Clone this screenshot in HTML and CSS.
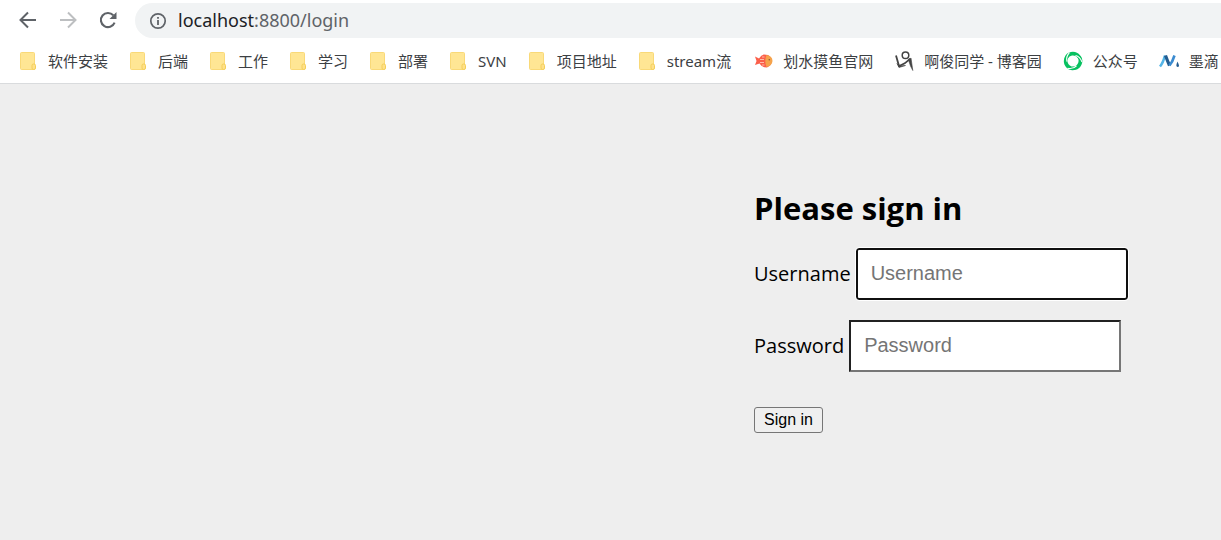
FILE: index.html
```
<!DOCTYPE html>
<html lang="zh">
<head>
    <meta charset="UTF-8">
    <meta name="viewport" content="width=device-width, initial-scale=1.0">
    <title>Please sign in</title>
    <link rel="stylesheet" href="styles.css">
</head>
<body>

<!-- folder icon shared by the bookmarks -->
<svg class="defs" width="0" height="0" aria-hidden="true">
    <symbol id="folder" viewBox="0 0 16 18">
        <rect x="0.5" y="0.5" width="14" height="17" rx="1" fill="#ffe694" stroke="#f9d978"/>
        <rect x="12" y="12" width="3.500" height="5.500" rx="1.500" fill="#ffe08a" stroke="#f3cf58"/>
    </symbol>
</svg>

<header class="browser">
    <div class="toolbar">
        <button class="nav-btn" type="button" aria-label="Back">
            <svg width="20" height="20" viewBox="0 0 20 20"><path d="M18 10H3M10 2.5L2.5 10L10 17.5" fill="none" stroke="#5f6368" stroke-width="2"/></svg>
        </button>
        <button class="nav-btn" type="button" aria-label="Forward">
            <svg width="20" height="20" viewBox="0 0 20 20"><path d="M2 10H17M10 2.5L17.5 10L10 17.5" fill="none" stroke="#bdbfc1" stroke-width="2"/></svg>
        </button>
        <button class="nav-btn" type="button" aria-label="Reload">
            <svg width="20" height="20" viewBox="0 0 20 20"><path d="M16.6 12.7A7.1 7.1 0 1 1 15.3 5.3" fill="none" stroke="#5f6368" stroke-width="2.1"/><path d="M18.5 2V9H11.5Z" fill="#5f6368"/></svg>
        </button>
        <div class="address" role="textbox" aria-label="Address">
            <svg width="18" height="18" viewBox="0 0 18 18"><circle cx="9" cy="9" r="7.2" fill="none" stroke="#5f6368" stroke-width="1.7"/><path d="M8.1 8H9.9V13H8.1ZM8.1 5H9.9V6.8H8.1Z" fill="#5f6368"/></svg>
            <span class="url"><span class="host">localhost</span>:8800/login</span>
        </div>
    </div>
    <nav class="bookmarks">
        <a href="#"><svg width="16" height="18"><use href="#folder"/></svg>软件安装</a>
        <a href="#"><svg width="16" height="18"><use href="#folder"/></svg>后端</a>
        <a href="#"><svg width="16" height="18"><use href="#folder"/></svg>工作</a>
        <a href="#"><svg width="16" height="18"><use href="#folder"/></svg>学习</a>
        <a href="#"><svg width="16" height="18"><use href="#folder"/></svg>部署</a>
        <a href="#"><svg width="16" height="18"><use href="#folder"/></svg>SVN</a>
        <a href="#"><svg width="16" height="18"><use href="#folder"/></svg>项目地址</a>
        <a href="#"><svg width="16" height="18"><use href="#folder"/></svg>stream流</a>
        <a href="#" class="site">
            <svg width="20" height="20" viewBox="0 0 20 20">
                <path d="M2 5.500L6 7.500Q8 4 11 3.500L15 4Q19 6.500 19 10Q18.500 14.500 14 16.500Q9 16.500 6.500 12.500L2 14L3.500 10Z" fill="#fb5f4a"/>
                <path d="M13.500 4Q19.500 5 19.500 10Q19 15 13.500 16Q11 10 13.500 4Z" fill="#f5a34b"/>
                <path d="M7 8.500H11M7 11.500H11M9 6H11.500M9 14H11.500" fill="none" stroke="#ffc4b4" stroke-width="0.900"/>
                <circle cx="16.300" cy="8.800" r="0.800" fill="#8d5a32"/>
            </svg>划水摸鱼官网</a>
        <a href="#" class="site">
            <svg width="20" height="20" viewBox="0 0 20 20">
                <circle cx="11.500" cy="4.200" r="3.300" fill="none" stroke="#444" stroke-width="1.500"/>
                <path d="M2 4.500L5 15Q12 12.500 16 7.500" fill="none" stroke="#444" stroke-width="1.800"/>
                <path d="M3 12.500L5 15L11.500 14.500L5 16.500ZM14.500 9L17 7L18.800 19.500L16.500 15Z" fill="#444" stroke="#444" stroke-width="0.600"/>
            </svg>啊俊同学 - 博客园</a>
        <a href="#" class="site">
            <svg width="20" height="20" viewBox="0 0 20 20">
                <!-- one blade, turned three times -->
                <defs>
                    <g id="blade">
                        <path d="M2.500 4.500C6 -0.500 14 -0.500 17 4.500L19.500 10.500L15.500 8C13 4 9 3.500 6 6C4 7.800 3.300 9.500 3.600 12C1 10 0.800 7 2.500 4.500Z" fill="#07c160"/>
                    </g>
                    <path id="slit" d="M12.500 4.500Q17 5.500 19 11" fill="none" stroke="#fff" stroke-width="1.100"/>
                </defs>
                <use href="#blade"/>
                <use href="#blade" transform="rotate(120 10 10)"/>
                <use href="#blade" transform="rotate(240 10 10)"/>
                <use href="#slit"/>
                <use href="#slit" transform="rotate(120 10 10)"/>
                <use href="#slit" transform="rotate(240 10 10)"/>
            </svg>公众号</a>
        <a href="#" class="site">
            <svg width="20" height="20" viewBox="0 0 20 20">
                <path d="M1 15.500Q4 12 6 4.500" fill="none" stroke="#54b5e8" stroke-width="2.600"/>
                <path d="M6.500 4.500Q8.500 10 10.500 14.500" fill="none" stroke="#245d91" stroke-width="3.200"/>
                <path d="M10.500 14.500Q13.500 11 15.500 4.500" fill="none" stroke="#3b8bd0" stroke-width="2.600"/>
                <path d="M18.500 10.500Q20.500 14.500 19.800 15.500Q18.500 16.500 17.500 15.300Q17 14 18.500 10.500Z" fill="#245d91"/>
            </svg>墨滴</a>
    </nav>
</header>

<main>
    <form class="form-signin" onsubmit="return false">
        <h2>Please sign in</h2>
        <p>
            <label for="username">Username</label>
            <input type="text" id="username" class="active" name="username" placeholder="Username" required>
        </p>
        <p>
            <label for="password">Password</label>
            <input type="password" id="password" name="password" placeholder="Password" required>
        </p>
        <button class="submit" type="submit">Sign in</button>
    </form>
</main>

</body>
</html>
```
FILE: styles.css
```
* {
    box-sizing: border-box;
}
body {
    margin: 0;
    background-color: #eeeeee;
    color: #000;
    font-family: "Noto Sans", "Noto Sans CJK SC", sans-serif;
    overflow-x: hidden;
}
.defs {
    position: absolute;
}
.browser {
    background: #fff;
    border-bottom: 1px solid #d9dbdd;
    overflow: hidden;
}
.toolbar {
    display: flex;
    align-items: center;
    gap: 20px;
    padding: 3px 0 0 18px;
}
.nav-btn {
    display: flex;
    padding: 0 0 2px;
    border: 0;
    background: none;
}
.address {
    display: flex;
    flex: 1;
    align-items: center;
    gap: 11px;
    height: 35px;
    margin-left: -3px;
    padding-left: 14px;
    border-radius: 18px 0 0 18px;
    background: #f1f3f4;
}
.url {
    padding-bottom: 2px;
    color: #5f6368;
    font-size: 18px;
    line-height: 24px;
}
.host {
    color: #202124;
}
.bookmarks {
    display: flex;
    gap: 22px;
    height: 45px;
    padding-left: 20px;
}
.bookmarks a {
    display: flex;
    flex: none;
    align-items: center;
    gap: 12px;
    color: #3c4043;
    font-size: 15px;
    text-decoration: none;
    white-space: nowrap;
}
.bookmarks .site {
    gap: 10px;
}
.bookmarks .site + .site {
    margin-left: -1px;
}
.form-signin {
    width: 467px;
    margin-left: auto;
    padding-top: 104px;
    font-family: "Open Sans", sans-serif;
    font-size: 20px;
}
h2 {
    margin: 0 0 20px;
    font-size: 31px;
    line-height: 40px;
}
p {
    display: flex;
    align-items: center;
    gap: 5px;
    margin: 0 0 20px;
}
label {
    padding-bottom: 2px;
}
input {
    width: 272px;
    height: 52px;
    padding: 0 13px 2px;
    border: 2px inset #767676;
    background: #fff;
    font: 20px "Liberation Sans", Arial, sans-serif;
}
input::placeholder {
    color: #757575;
}
input.active {
    border: 2px solid #101010;
    border-radius: 3px;
    outline: 1px solid #fff;
}
.submit {
    height: 26px;
    margin-top: 15px;
    padding: 0 9px;
    border: 1px solid #767676;
    border-radius: 3px;
    background: #efefef;
    color: #000;
    font: 16px "Liberation Sans", Arial, sans-serif;
}
```
